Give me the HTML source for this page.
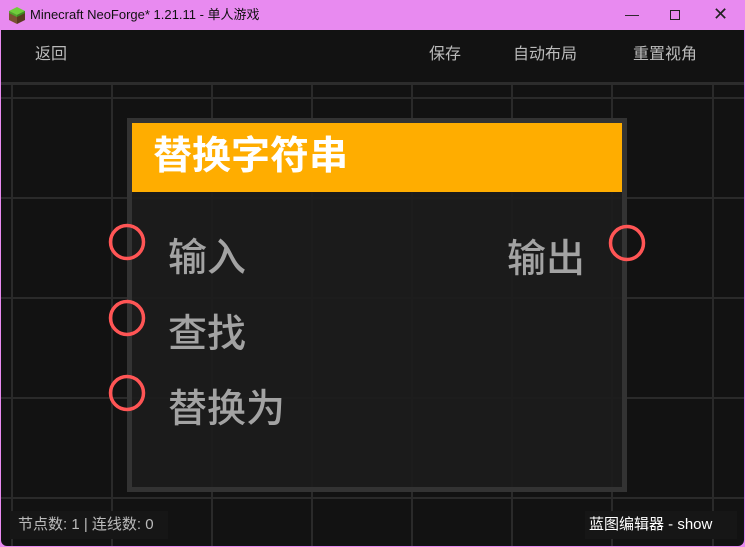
<!DOCTYPE html>
<html><head><meta charset="utf-8"><style>
*{margin:0;padding:0;box-sizing:border-box}
body{width:745px;height:547px;overflow:hidden;background:#e88af0;font-family:"Liberation Sans","Noto Sans CJK SC",sans-serif;position:relative}
.t{position:absolute;white-space:nowrap;line-height:1}
#win{position:absolute;left:1px;top:30px;width:743px;height:516px;background:#121212;border-radius:0 0 6px 6px;overflow:hidden}
.v{position:absolute;top:53px;bottom:0;width:2px;background:#2a2a2a}
.h{position:absolute;left:0;right:0;height:2px;background:#2a2a2a}
.lb{font-size:39px;color:#a3a3a3;font-weight:500}
</style></head><body>
<svg style="position:absolute;left:9px;top:7px" width="16" height="17" viewBox="0 0 16 17"><polygon points="8,0 16,4 8,8 0,4" fill="#6fce3a"/><polygon points="0,4 8,8 8,17 0,13" fill="#7a5232"/><polygon points="16,4 8,8 8,17 16,13" fill="#5a3a20"/><polygon points="0,4 8,8 8,10 0,6" fill="#4fa82a"/><polygon points="16,4 8,8 8,10 16,6" fill="#3f8a20"/></svg>
<div class="t" style="left:30px;top:8px;font-size:13px;color:#111">Minecraft NeoForge* 1.21.11 - 单人游戏</div>
<div class="t" style="left:625px;top:7px;font-size:14px;color:#222">—</div>
<div style="position:absolute;left:670px;top:10px;width:10px;height:10px;border:1px solid #222"></div>
<div class="t" style="left:713px;top:5px;font-size:18px;color:#222">✕</div>
<div id="win">
<div class="v" style="left:10px"></div><div class="v" style="left:110px"></div><div class="v" style="left:210px"></div><div class="v" style="left:310px"></div><div class="v" style="left:410px"></div><div class="v" style="left:510px"></div><div class="v" style="left:610px"></div><div class="v" style="left:711px"></div>
<div class="h" style="top:52px;background:#2c2c2c;height:3px"></div>
<div class="h" style="top:67px"></div><div class="h" style="top:167px"></div><div class="h" style="top:267px"></div><div class="h" style="top:367px"></div><div class="h" style="top:467px"></div>
<div style="position:absolute;left:0;right:0;top:0;height:52px;background:#121212"></div>
<div class="t" style="left:34px;top:17px;font-size:16px;color:#bbb">返回</div>
<div class="t" style="left:428px;top:17px;font-size:16px;color:#bbb">保存</div>
<div class="t" style="left:512px;top:17px;font-size:16px;color:#bbb">自动布局</div>
<div class="t" style="left:632px;top:17px;font-size:16px;color:#bbb">重置视角</div>
<div style="position:absolute;left:126px;top:88px;width:500px;height:374px;border:5px solid #333;background:rgba(28,28,28,.95)"></div>
<div style="position:absolute;left:131px;top:93px;width:490px;height:69px;background:#ffad00"></div>
<div class="t" style="left:152px;top:107px;font-size:39px;color:#fff;font-weight:bold">替换字符串</div>
<div class="t lb" style="left:167px;top:209px">输入</div>
<div class="t lb" style="left:167px;top:285px">查找</div>
<div class="t lb" style="left:167px;top:360px">替换为</div>
<div class="t lb" style="left:506px;top:210px">输出</div>
<svg style="position:absolute;left:0;top:0" width="743" height="516"><g fill="none" stroke="#ff5555" stroke-width="3.5"><circle cx="126" cy="212" r="16.5"/><circle cx="126" cy="288" r="16.5"/><circle cx="126" cy="363" r="16.5"/><circle cx="626" cy="213" r="16.5"/></g></svg>
<div class="t" style="left:9px;top:481px;width:158px;height:28px;background:#161616;font-size:15px;color:#bbb;padding:6px 0 0 8px">节点数: 1 | 连线数: 0</div>
<div class="t" style="left:584px;top:481px;width:152px;height:28px;background:#161616;font-size:15px;color:#fff;padding:6px 0 0 4px">蓝图编辑器 - show</div>
</div>
</body></html>
